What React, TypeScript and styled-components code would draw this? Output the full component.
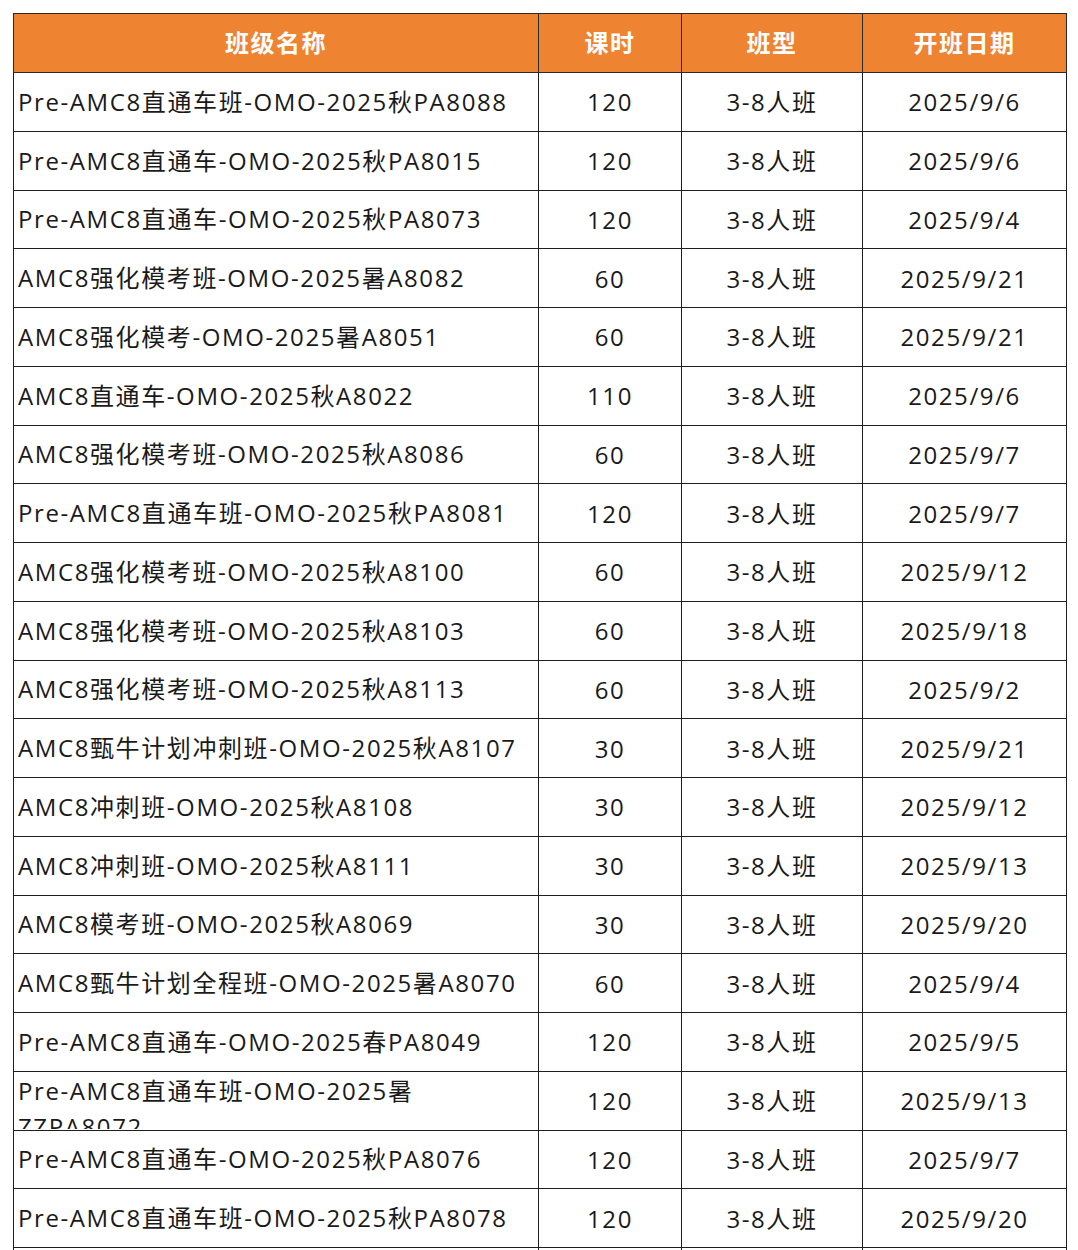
import React from "react";
import styled, { createGlobalStyle } from "styled-components";

const Global = createGlobalStyle`
  html, body { margin: 0; padding: 0; background: #ffffff; }
  body { font-family: "Open Sans", "Noto Sans CJK SC", sans-serif; }
`;

const Page = styled.div`
  padding: 13px 0 0 13px;
  height: 1250px;
  overflow: hidden;
  box-sizing: border-box;
`;

const Table = styled.table`
  border-collapse: collapse;
  table-layout: fixed;
  border-top: 1.5px solid #2a2a2a;
`;

const HeadCell = styled.th<{ $w: number }>`
  width: ${(p) => p.$w}px;
  height: 55px;
  background: #ee8332;
  color: #ffffff;
  font-family: "Noto Sans CJK SC", sans-serif;
  font-weight: 700;
  font-size: 24px;
  letter-spacing: 1.5px;
  text-align: center;
  border: 1.5px solid #2a2a2a;
  border-top: none;
  padding: 0 0 3px 0;
`;

const Row = styled.tr`
  height: 58.75px;
`;

const Cell = styled.td<{ $left?: boolean }>`
  border: 1.5px solid #1e1e1e;
  padding: 0 ${(p) => (p.$left ? "4px" : "0")};
  font-size: 24px;
  letter-spacing: 1.6px;
  color: #1a1a1a;
  text-align: ${(p) => (p.$left ? "left" : "center")};
  vertical-align: middle;
  overflow: hidden;
  line-height: 37px;
`;

const Clip = styled.div`
  max-height: 56px;
  overflow: hidden;
  line-height: 36px;
`;

const rows: [string, string, string, string][] = [
  ["Pre-AMC8直通车班-OMO-2025秋PA8088", "120", "3-8人班", "2025/9/6"],
  ["Pre-AMC8直通车-OMO-2025秋PA8015", "120", "3-8人班", "2025/9/6"],
  ["Pre-AMC8直通车-OMO-2025秋PA8073", "120", "3-8人班", "2025/9/4"],
  ["AMC8强化模考班-OMO-2025暑A8082", "60", "3-8人班", "2025/9/21"],
  ["AMC8强化模考-OMO-2025暑A8051", "60", "3-8人班", "2025/9/21"],
  ["AMC8直通车-OMO-2025秋A8022", "110", "3-8人班", "2025/9/6"],
  ["AMC8强化模考班-OMO-2025秋A8086", "60", "3-8人班", "2025/9/7"],
  ["Pre-AMC8直通车班-OMO-2025秋PA8081", "120", "3-8人班", "2025/9/7"],
  ["AMC8强化模考班-OMO-2025秋A8100", "60", "3-8人班", "2025/9/12"],
  ["AMC8强化模考班-OMO-2025秋A8103", "60", "3-8人班", "2025/9/18"],
  ["AMC8强化模考班-OMO-2025秋A8113", "60", "3-8人班", "2025/9/2"],
  ["AMC8甄牛计划冲刺班-OMO-2025秋A8107", "30", "3-8人班", "2025/9/21"],
  ["AMC8冲刺班-OMO-2025秋A8108", "30", "3-8人班", "2025/9/12"],
  ["AMC8冲刺班-OMO-2025秋A8111", "30", "3-8人班", "2025/9/13"],
  ["AMC8模考班-OMO-2025秋A8069", "30", "3-8人班", "2025/9/20"],
  ["AMC8甄牛计划全程班-OMO-2025暑A8070", "60", "3-8人班", "2025/9/4"],
  ["Pre-AMC8直通车-OMO-2025春PA8049", "120", "3-8人班", "2025/9/5"],
  ["Pre-AMC8直通车班-OMO-2025暑ZZPA8072", "120", "3-8人班", "2025/9/13"],
  ["Pre-AMC8直通车-OMO-2025秋PA8076", "120", "3-8人班", "2025/9/7"],
  ["Pre-AMC8直通车班-OMO-2025秋PA8078", "120", "3-8人班", "2025/9/20"],
  ["", "", "", ""],
];

export default function App() {
  return (
    <>
      <Global />
      <Page>
        <Table>
          <thead>
            <tr>
              <HeadCell $w={524}>班级名称</HeadCell>
              <HeadCell $w={142}>课时</HeadCell>
              <HeadCell $w={180}>班型</HeadCell>
              <HeadCell $w={203}>开班日期</HeadCell>
            </tr>
          </thead>
          <tbody>
            {rows.map((r, i) => (
              <Row key={i}>
                <Cell $left>
                  <Clip>{r[0]}</Clip>
                </Cell>
                <Cell>{r[1]}</Cell>
                <Cell>{r[2]}</Cell>
                <Cell>{r[3]}</Cell>
              </Row>
            ))}
          </tbody>
        </Table>
      </Page>
    </>
  );
}
